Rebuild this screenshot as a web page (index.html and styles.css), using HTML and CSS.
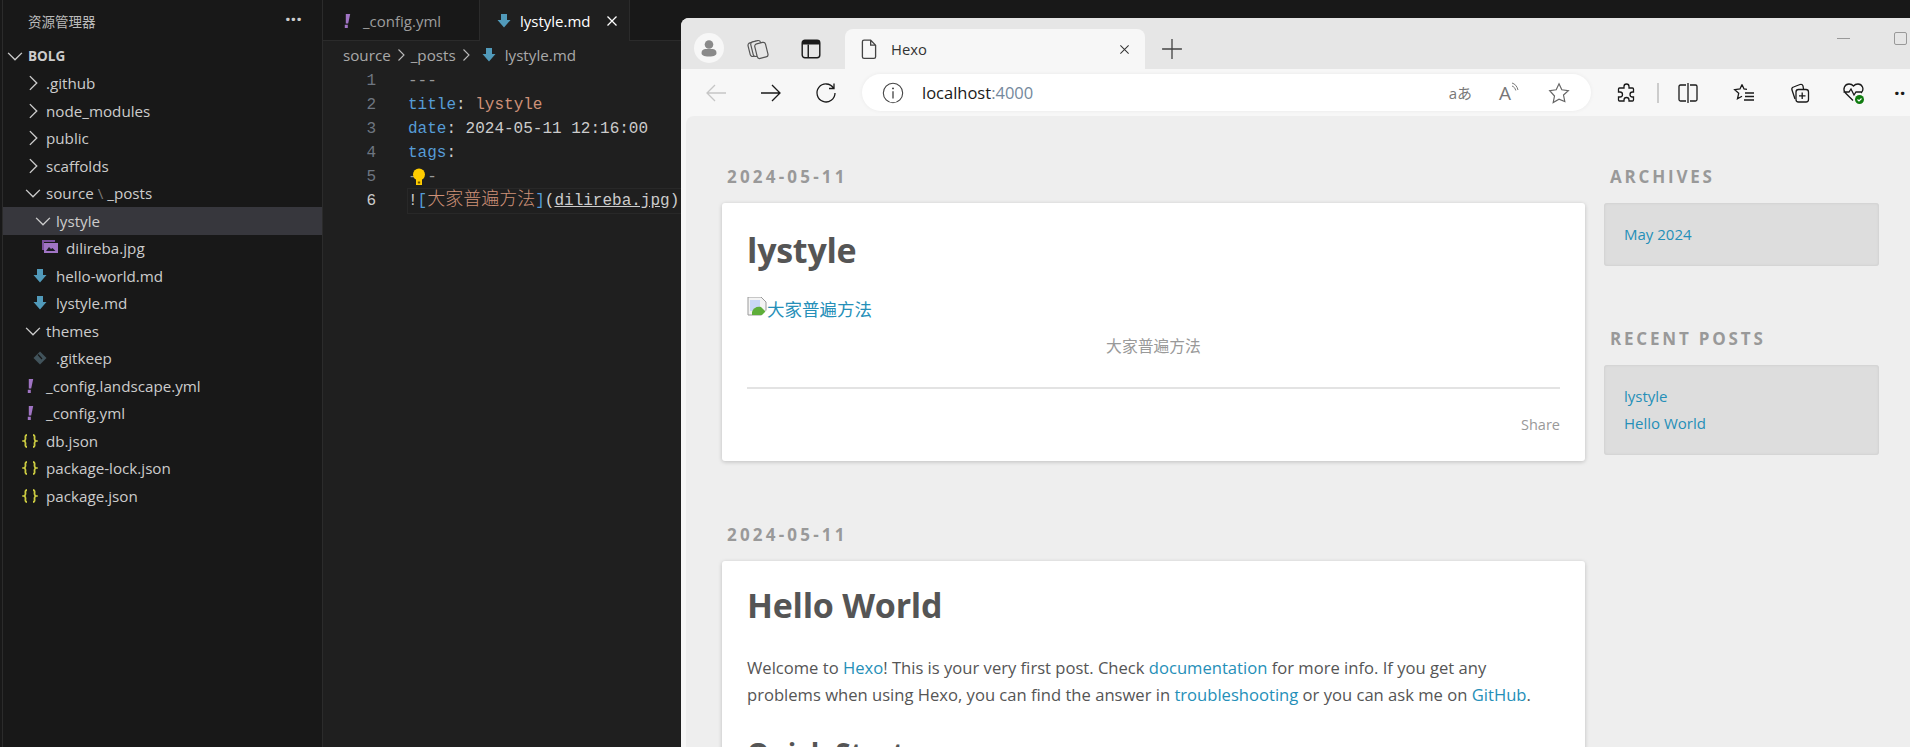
FILE: index.html
```html
<!DOCTYPE html>
<html lang="zh">

<head>
    <meta charset="UTF-8">
    <title>lystyle.md - bolg</title>
    <link rel="stylesheet" href="styles.css">
</head>

<body>
    <svg class="defs" width="0" height="0">
        <symbol id="chev-r" viewBox="0 0 16 16"><path d="M5.5 2.5 11 8l-5.5 5.500" fill="none" stroke="currentColor" stroke-width="1.1"/></symbol>
        <symbol id="chev-d" viewBox="0 0 16 16"><path d="M2.5 5.5 8 11l5.5-5.500" fill="none" stroke="currentColor" stroke-width="1.1"/></symbol>
        <symbol id="md" viewBox="0 0 16 16"><path d="M5 1h6v6h3.500L8 14.500 1.500 7H5z" fill="#519aba"/></symbol>
        <symbol id="yml" viewBox="0 0 16 16"><path d="M6.800 1h4.400L9.200 10.500H6.800zM5.800 11.800h3V15h-3z" fill="#a074c4"/></symbol>
        <symbol id="json" viewBox="0 0 16 16"><path d="M5 2C2.800 2 3.500 4.500 3.500 6S1.800 8 1.800 8s1.700.5 1.700 2-.7 4 1.500 4M11 2c2.200 0 1.500 2.500 1.500 4s1.700 2 1.700 2-1.700.5-1.700 2 .7 4-1.500 4" fill="none" stroke="#cbcb41" stroke-width="1.800"/></symbol>
    </svg>

    <div class="vscode">
        <aside class="explorer">
            <div class="explorer_title">
                <span>资源管理器</span>
                <span class="explorer_more">···</span>
            </div>
            <div class="tree">
                <div class="row row_root"><svg class="twist"><use href="#chev-d"/></svg><b>BOLG</b></div>
                <div class="row lv1"><svg class="twist"><use href="#chev-r"/></svg>.github</div>
                <div class="row lv1"><svg class="twist"><use href="#chev-r"/></svg>node_modules</div>
                <div class="row lv1"><svg class="twist"><use href="#chev-r"/></svg>public</div>
                <div class="row lv1"><svg class="twist"><use href="#chev-r"/></svg>scaffolds</div>
                <div class="row lv1"><svg class="twist"><use href="#chev-d"/></svg>source<span class="sep">\</span>_posts</div>
                <div class="row lv2 row_selected"><svg class="twist"><use href="#chev-d"/></svg>lystyle</div>
                <div class="row lv3">
                    <svg class="ficon" viewBox="0 0 16 16"><path d="M0 0h13v2H2v8H0z" fill="#7a4f9e"/><path d="M2 3h14v10H2z" fill="#a074c4"/><path d="M4 11l3-4 2 2 1.500-1 3 3z" fill="#1c1c24"/></svg>dilireba.jpg
                </div>
                <div class="row lv2b"><svg class="ficon"><use href="#md"/></svg>hello-world.md</div>
                <div class="row lv2b"><svg class="ficon"><use href="#md"/></svg>lystyle.md</div>
                <div class="row lv1"><svg class="twist"><use href="#chev-d"/></svg>themes</div>
                <div class="row lv2b">
                    <svg class="ficon" viewBox="0 0 16 16"><path d="M8 1.500 14.500 8 8 14.500 1.500 8z" fill="#41535b"/><path d="M6 4.500 10 9" stroke="#181818" stroke-width="1.200"/></svg>.gitkeep
                </div>
                <div class="row lv1b"><svg class="ficon"><use href="#yml"/></svg>_config.landscape.yml</div>
                <div class="row lv1b"><svg class="ficon"><use href="#yml"/></svg>_config.yml</div>
                <div class="row lv1b"><svg class="ficon"><use href="#json"/></svg>db.json</div>
                <div class="row lv1b"><svg class="ficon"><use href="#json"/></svg>package-lock.json</div>
                <div class="row lv1b"><svg class="ficon"><use href="#json"/></svg>package.json</div>
            </div>
        </aside>

        <section class="editor">
            <div class="tabs">
                <div class="tab">
                    <svg class="ficon"><use href="#yml"/></svg>
                    <span>_config.yml</span>
                </div>
                <div class="tab tab_active">
                    <svg class="ficon"><use href="#md"/></svg>
                    <span>lystyle.md</span>
                    <svg class="tab_close" viewBox="0 0 12 12"><path d="M1.500 1.500l9 9m0-9l-9 9" stroke="#fff" stroke-width="1.300"/></svg>
                </div>
            </div>
            <div class="crumbs">
                <span>source</span><svg class="crumb_sep"><use href="#chev-r"/></svg>
                <span>_posts</span><svg class="crumb_sep"><use href="#chev-r"/></svg>
                <svg class="ficon"><use href="#md"/></svg><span>lystyle.md</span>
            </div>
            <div class="code">
                <div class="line"><span class="ln">1</span><span class="cd dim">---</span></div>
                <div class="line"><span class="ln">2</span><span class="cd"><i class="key">title</i>: <i class="str">lystyle</i></span></div>
                <div class="line"><span class="ln">3</span><span class="cd"><i class="key">date</i>: 2024-05-11 12:16:00</span></div>
                <div class="line"><span class="ln">4</span><span class="cd"><i class="key">tags</i>:</span></div>
                <div class="line"><span class="ln">5</span><span class="cd dim">- -</span>
                    <svg class="bulb" viewBox="0 0 14 18"><circle cx="7" cy="6.500" r="6" fill="#ffcc00"/><path d="M4 11h6v6H4z" fill="#ffcc00"/><path d="M5.800 13.500h2.400v2H5.800z" fill="#6b5500"/></svg>
                </div>
                <div class="line line_active"><span class="ln">6</span><span class="cd">!<i class="key">[</i><i class="str cjk">大家普遍方法</i><i class="key">]</i>(<u>dilireba.jpg</u>)</span></div>
            </div>
        </section>
    </div>

    <div class="browser">
        <div class="tabstrip">
            <span class="avatar">
                <svg viewBox="0 0 20 20" width="20" height="20"><circle cx="10" cy="6.500" r="4.300" fill="#8a8a8a"/><path d="M2.500 15c0-3 2-4 4-4h7c2 0 4 1 4 4 0 2-2 3.500-7.500 3.500S2.500 17 2.500 15z" fill="#8a8a8a"/></svg>
            </span>
            <svg class="bicon strip_coll" viewBox="0 0 22 22"><g fill="#e6e6e6" stroke="#555" stroke-width="1.200"><rect x="2" y="4" width="10" height="14" rx="2.500" transform="rotate(-14 7 11)"/><rect x="5" y="3" width="10" height="15" rx="2.500" transform="rotate(-14 10 11)"/><rect x="9" y="5" width="11" height="15" rx="2.500" transform="rotate(-14 14 13)"/></g></svg>
            <svg class="bicon strip_vt" viewBox="0 0 20 20"><rect x="2" y="2" width="16" height="16" rx="2.500" fill="none" stroke="#1a1a1a" stroke-width="1.300"/><path d="M2 3.500C2 2.500 3 2 4 2h12c1 0 2 .5 2 1.500V6H2z" fill="#1a1a1a"/><path d="M7.500 6v12" stroke="#1a1a1a" stroke-width="1.300"/></svg>
            <div class="btab">
                <svg class="bicon" viewBox="0 0 20 20"><path d="M4 3.500C4 2.500 4.800 2 5.500 2h6L16 6.500V17c0 1-.8 1.500-1.500 1.500h-9C4.800 18.500 4 18 4 17zM11.500 2v4.500H16" fill="none" stroke="#444" stroke-width="1.200"/></svg>
                <span class="btab_title">Hexo</span>
                <svg class="btab_close" viewBox="0 0 12 12"><path d="M1.500 1.500l9 9m0-9l-9 9" stroke="#333" stroke-width="1.100"/></svg>
            </div>
            <svg class="bicon strip_plus" viewBox="0 0 20 20"><path d="M10 1v18M1 10h18" stroke="#444" stroke-width="1.200"/></svg>
            <div class="winctl">
                <span class="win_min"></span>
                <span class="win_max"></span>
            </div>
        </div>

        <div class="toolbar">
            <svg class="bicon nav_first" viewBox="0 0 22 22"><path d="M21 11H2m8-8-8 8 8 8" fill="none" stroke="#c6c6c6" stroke-width="1.300"/></svg>
            <svg class="bicon nav_item" viewBox="0 0 22 22"><path d="M1 11h19m-8-8 8 8-8 8" fill="none" stroke="#1a1a1a" stroke-width="1.300"/></svg>
            <svg class="bicon nav_item" viewBox="0 0 22 22"><path d="M18.500 6A9 9 0 1 0 20 11M19 1.500V6.500H14" fill="none" stroke="#1a1a1a" stroke-width="1.300"/></svg>
            <div class="addr">
                <svg class="bicon" viewBox="0 0 20 20"><circle cx="10" cy="10" r="8.800" fill="none" stroke="#444" stroke-width="1"/><path d="M10 8.500V15" stroke="#444" stroke-width="1.200"/><circle cx="10" cy="5.800" r=".9" fill="#444"/></svg>
                <span class="addr_url">localhost<span class="addr_port">:4000</span></span>
                <span class="addr_right">
                    <span class="addr_tr">aあ</span>
                    <span class="addr_read">
                        <span>A</span>
                        <svg viewBox="0 0 10 12" width="10" height="12"><path d="M1 1c3 1 5 3 6 7M1 4c2 .7 3 2 3.800 4.500" fill="none" stroke="#777" stroke-width="1"/></svg>
                    </span>
                    <svg class="bicon" viewBox="0 0 22 22"><path d="M11 1.800l2.800 6 6.500.8-4.800 4.400 1.300 6.500L11 17.200l-5.800 3.300 1.300-6.500L1.700 8.600l6.500-.8z" fill="none" stroke="#666" stroke-width="1.200"/></svg>
                </span>
            </div>
            <div class="tools">
                <svg class="bicon" viewBox="0 0 22 22"><path d="M9 6V4.500a2.500 2.500 0 0 1 5 0V6h3.500a1 1 0 0 1 1 1v3h-1a2.500 2.500 0 0 0 0 5h1v3a1 1 0 0 1-1 1H14v-1a2.500 2.500 0 0 0-5 0v1H4.500a1 1 0 0 1-1-1v-3H5a2.500 2.500 0 0 0 0-5H3.500V7a1 1 0 0 1 1-1z" fill="none" stroke="#1a1a1a" stroke-width="1.300"/></svg>
                <span class="tool_div"></span>
                <svg class="bicon" viewBox="0 0 22 22"><path d="M9 3H3.500C2.500 3 2 3.500 2 4.500v13c0 1 .5 1.500 1.500 1.500H9m4-16h5.500c1 0 1.500.5 1.500 1.500v13c0 1-.5 1.500-1.500 1.500H13M11 1v20" fill="none" stroke="#1a1a1a" stroke-width="1.300"/></svg>
                <svg class="bicon tool_fav" viewBox="0 0 22 22"><path d="M9 2.500l2 4.500 3 .4M9 2.500L7 7l-5.300.7 4 3.600-1.200 5.500L9 14.200M12 11h9M12 14.500h9M11 18h10" fill="none" stroke="#1a1a1a" stroke-width="1.300"/></svg>
                <svg class="bicon tool_coll" viewBox="0 0 22 22"><path d="M7 17l-3-9c-.5-1.500 0-2.500 1.500-3L12 2.500c1.500-.5 2.500 0 3 1.500L15.500 7" fill="none" stroke="#1a1a1a" stroke-width="1.300"/><rect x="8" y="7.500" width="12.500" height="12.500" rx="2.500" fill="none" stroke="#1a1a1a" stroke-width="1.300"/><path d="M14.200 10.500v6.500M11 13.800h6.500" stroke="#1a1a1a" stroke-width="1.300"/></svg>
                <svg class="bicon tool_heart" viewBox="0 0 24 24"><path d="M11 19.500 3.500 12C0 8 3 3 7 3c2 0 3.500.8 4.500 2 1-1.200 2.500-2 4.500-2 4 0 7 5 3 9M1.500 11H7l2-3 3 6 2-3h6" fill="none" stroke="#1a1a1a" stroke-width="1.300"/><circle cx="17.500" cy="18.500" r="4.500" fill="#107c10"/><path d="M15.500 18.500l1.500 1.500 2.500-2.500" fill="none" stroke="#fff" stroke-width="1.100"/></svg>
                <span class="tool_more">··</span>
            </div>
        </div>

        <div class="viewport">
            <main class="posts">
                <article class="post">
                    <div class="post_date">2024-05-11</div>
                    <div class="card">
                        <h1>lystyle</h1>
                        <a class="pic" href="#">
                            <svg class="broken" viewBox="0 0 20 20"><path d="M1 0h13l5 5v13H1z" fill="#f4f4f4" stroke="#9a9a9a"/><path d="M3 3h10v11H3z" fill="#c9d7f5"/><path d="M5 15c1-4 5-6 9-5l4 4v4H5z" fill="#5fae3a"/><path d="M13 20l7-7v7z" fill="#fff"/></svg>大家普遍方法</a>
                        <div class="caption">大家普遍方法</div>
                        <div class="card_foot"><span class="share">Share</span></div>
                    </div>
                </article>
                <article class="post post_second">
                    <div class="post_date">2024-05-11</div>
                    <div class="card">
                        <h1>Hello World</h1>
                        <p>Welcome to <a href="#">Hexo</a>! This is your very first post. Check <a href="#">documentation</a> for more info. If you get any problems when using Hexo, you can find the answer in <a href="#">troubleshooting</a> or you can ask me on <a href="#">GitHub</a>.</p>
                        <h2>Quick Start</h2>
                    </div>
                </article>
            </main>
            <aside class="widgets">
                <div class="widget_title">Archives</div>
                <div class="widget">
                    <a href="#">May 2024</a>
                </div>
                <div class="widget_title widget_title_second">Recent Posts</div>
                <div class="widget">
                    <a href="#">lystyle</a>
                    <a href="#">Hello World</a>
                </div>
            </aside>
        </div>
    </div>
</body>

</html>
```

FILE: styles.css
```css
* {
    box-sizing: border-box;
}

html,
body {
    margin: 0;
    height: 747px;
    overflow: hidden;
    background: #181818;
}

body {
    position: relative;
    font-family: "Open Sans", "Noto Sans CJK SC", sans-serif;
    color: #ccc;
}

.defs {
    position: absolute;
}

/* vscode part */
.vscode {
    display: flex;
    height: 747px;
    padding-left: 2px;
}

.explorer {
    width: 321px;
    flex: none;
    border-left: 1px solid #2b2b2b;
    border-right: 1px solid #2b2b2b;
}

.explorer_title {
    display: flex;
    justify-content: space-between;
    align-items: center;
    height: 41px;
    padding: 0 20px 0 25px;
    font-size: 13.5px;
    color: #bbb;
}

.explorer_more {
    font-size: 20px;
    font-weight: 700;
    line-height: 1;
    color: #ccc;
    margin-top: -3px;
}

.tree {
    padding-top: 1px;
}

.row {
    display: flex;
    align-items: center;
    height: 27.5px;
    font-size: 15.2px;
    white-space: nowrap;
    color: #ccc;
}

.row_root {
    padding-left: 2px;
    font-size: 13.5px;
}

.row_root b {
    color: #ccc;
}

.twist {
    width: 20px;
    height: 20px;
    flex: none;
    margin-right: 3px;
    color: #ccc;
}

.lv1 {
    padding-left: 20px;
}

.lv2 {
    padding-left: 30px;
}

.lv3 {
    padding-left: 39px;
}

.lv2b {
    padding-left: 29px;
}

.lv1b {
    padding-left: 19px;
}

.row .ficon {
    width: 16px;
    height: 16px;
    flex: none;
    margin-right: 8px;
}

.row_selected {
    background: #37373d;
}

.sep {
    margin: 0 4px;
    color: #777;
}

.editor {
    flex: 1;
    min-width: 0;
    background: #1f1f1f;
}

.tabs {
    display: flex;
    height: 41px;
    background: #181818;
    border-bottom: 1px solid #2b2b2b;
}

.tab {
    display: flex;
    align-items: center;
    width: 157px;
    height: 41px;
    padding-left: 16px;
    font-size: 15px;
    color: #9d9d9d;
    border-right: 1px solid #2b2b2b;
}

.tab .ficon {
    width: 16px;
    height: 16px;
    margin-right: 8px;
}

.tab_active {
    width: 150px;
    background: #1f1f1f;
    color: #fff;
}

.tab_close {
    width: 12px;
    height: 12px;
    margin-left: 15px;
}

.crumbs {
    display: flex;
    align-items: center;
    height: 28px;
    padding-left: 20px;
    font-size: 15.2px;
    color: #a9a9a9;
}

.crumbs .ficon {
    width: 16px;
    height: 16px;
    margin: 0 8px 0 5px;
}

.crumb_sep {
    width: 16px;
    height: 16px;
    margin: 0 2px;
    color: #bbb;
}

.code {
    font-family: "Liberation Mono", monospace;
    font-size: 16px;
    line-height: 24px;
}

.line {
    position: relative;
    display: flex;
    height: 24px;
    white-space: pre;
    color: #ccc;
}

.line i {
    font-style: normal;
}

.ln {
    width: 53px;
    flex: none;
    text-align: right;
    color: #6e7681;
}

.cd {
    margin-left: 32px;
}

.dim {
    color: #999;
}

.key {
    color: #569cd6;
}

.str {
    color: #ce9178;
}

.cjk {
    font-size: 18px;
    line-height: 20px;
    font-weight: 300;
}

.line_active .ln {
    color: #ccc;
}

.line_active .cd {
    flex: 1;
    outline: 1px solid #282828;
    font-family: "Liberation Mono", "Noto Sans CJK SC", monospace;
}

.bulb {
    position: absolute;
    left: 89px;
    top: 3px;
    width: 14px;
    height: 18px;
}

/* browser window on top */
.browser {
    position: absolute;
    left: 681px;
    top: 18px;
    width: 1229px;
    height: 729px;
    overflow: hidden;
    border-radius: 8px 0 0 0;
    background: #f7f7f7;
    font-family: "Open Sans", "Noto Sans CJK SC", sans-serif;
}

.tabstrip {
    display: flex;
    align-items: flex-end;
    height: 51px;
    background: #e6e6e6;
    padding-left: 13px;
}

.bicon {
    width: 22px;
    height: 22px;
    flex: none;
}

.avatar {
    display: flex;
    align-items: center;
    justify-content: center;
    width: 30px;
    height: 30px;
    margin-bottom: 6px;
    border-radius: 50%;
    background: #f7f7f7;
}

.strip_coll {
    margin: 0 0 9px 23px;
}

.strip_vt {
    margin: 0 0 9px 31px;
}

.btab {
    display: flex;
    align-items: center;
    width: 300px;
    height: 40px;
    margin-left: 23px;
    padding: 0 13px;
    border-radius: 8px 8px 0 0;
    background: #f7f7f7;
}

.btab_title {
    flex: 1;
    margin-left: 11px;
    font-size: 14.8px;
    color: #333;
}

.btab_close {
    width: 11px;
    height: 11px;
    margin-right: 2px;
}

.strip_plus {
    margin: 0 0 9px 16px;
}

.winctl {
    display: flex;
    align-items: center;
    gap: 44px;
    margin-left: auto;
    margin-right: 3px;
    align-self: flex-start;
    height: 40px;
}

.win_min {
    width: 13px;
    height: 1px;
    background: #999;
}

.win_max {
    width: 13px;
    height: 13px;
    border: 1px solid #999;
    border-radius: 2px;
}

.toolbar {
    display: flex;
    align-items: center;
    height: 47px;
    padding-left: 24px;
}

.nav_item {
    margin-left: 33px;
}

.addr {
    display: flex;
    align-items: center;
    width: 729px;
    height: 37px;
    margin-left: 25px;
    padding: 0 21px 0 20px;
    border-radius: 19px;
    background: #fff;
    box-shadow: 0 0 4px rgba(0, 0, 0, 0.06);
}

.addr_url {
    margin-left: 18px;
    font-size: 16.5px;
    color: #1a1a1a;
}

.addr_port {
    color: #74889c;
}

.addr_right {
    display: flex;
    align-items: center;
    gap: 27px;
    margin-left: auto;
}

.addr_tr {
    font-size: 15px;
    color: #777;
}

.addr_read {
    display: flex;
    align-items: flex-start;
    font-size: 19px;
    line-height: 22px;
    color: #777;
}

.tools {
    display: flex;
    align-items: center;
    margin-left: 24px;
}

.tool_div {
    width: 2px;
    height: 20px;
    margin: 0 18px 0 20px;
    background: #ccc;
}

.tool_fav {
    margin-left: 34px;
}

.tool_coll {
    margin-left: 33px;
}

.tool_heart {
    width: 24px;
    height: 24px;
    margin-left: 32px;
}

.tool_more {
    margin-left: 28px;
    font-size: 20px;
    font-weight: 700;
    color: #1a1a1a;
}

.viewport {
    display: flex;
    align-items: flex-start;
    height: 631px;
    margin-left: 5px;
    padding: 49px 0 0 36px;
    overflow: hidden;
    border-radius: 8px 0 0 0;
    background: #eee;
}

.posts {
    width: 863px;
    flex: none;
}

.post_date,
.widget_title {
    padding-left: 5px;
    height: 24px;
    font-size: 17px;
    line-height: 24px;
    font-weight: 700;
    letter-spacing: 3.2px;
    color: #999;
}

.widget_title {
    padding-left: 6px;
    letter-spacing: 2.8px;
}

.card {
    margin-top: 14px;
    padding: 25px;
    border-radius: 3px;
    background: #fff;
    box-shadow: 0 1px 4px rgba(0, 0, 0, 0.2);
    font-size: 16px;
    color: #555;
}

.card h1 {
    margin: 0;
    font-size: 34px;
    letter-spacing: -0.25px;
    line-height: 44px;
    font-weight: 700;
    color: #555;
}

.card a {
    color: #258fb8;
    text-decoration: none;
}

.pic {
    display: flex;
    align-items: flex-end;
    margin-top: 24px;
    font-size: 17.5px;
    line-height: 26px;
}

.broken {
    width: 20px;
    height: 20px;
    margin-bottom: 5px;
}

.caption {
    margin-top: 11px;
    text-align: center;
    font-size: 15.8px;
    line-height: 26px;
    color: #999;
}

.card_foot {
    margin-top: 28px;
    padding-top: 24px;
    border-top: 2px solid #e3e3e3;
    text-align: right;
    line-height: 22px;
}

.share {
    font-size: 14.5px;
    color: #999;
}

.post_second {
    margin-top: 62px;
}

.post_second h1 {
    margin-top: -3px;
}

.post_second p {
    max-width: 790px;
    margin: 27px 0 0;
    font-size: 16.6px;
    line-height: 27px;
}

.post_second h2 {
    margin: 26px 0 0;
    font-size: 28px;
    color: #555;
}

.widgets {
    width: 275px;
    flex: none;
    margin-left: 19px;
}

.widget_title {
    text-transform: uppercase;
}

.widget_title_second {
    margin-top: 61px;
}

.widget {
    margin-top: 14px;
    padding: 18px 20px;
    border-radius: 3px;
    background: #ddd;
    box-shadow: inset 0 0 3px rgba(0, 0, 0, 0.1);
    font-size: 15px;
    line-height: 27px;
}

.widget a {
    display: block;
    color: #258fb8;
    text-decoration: none;
}
```
